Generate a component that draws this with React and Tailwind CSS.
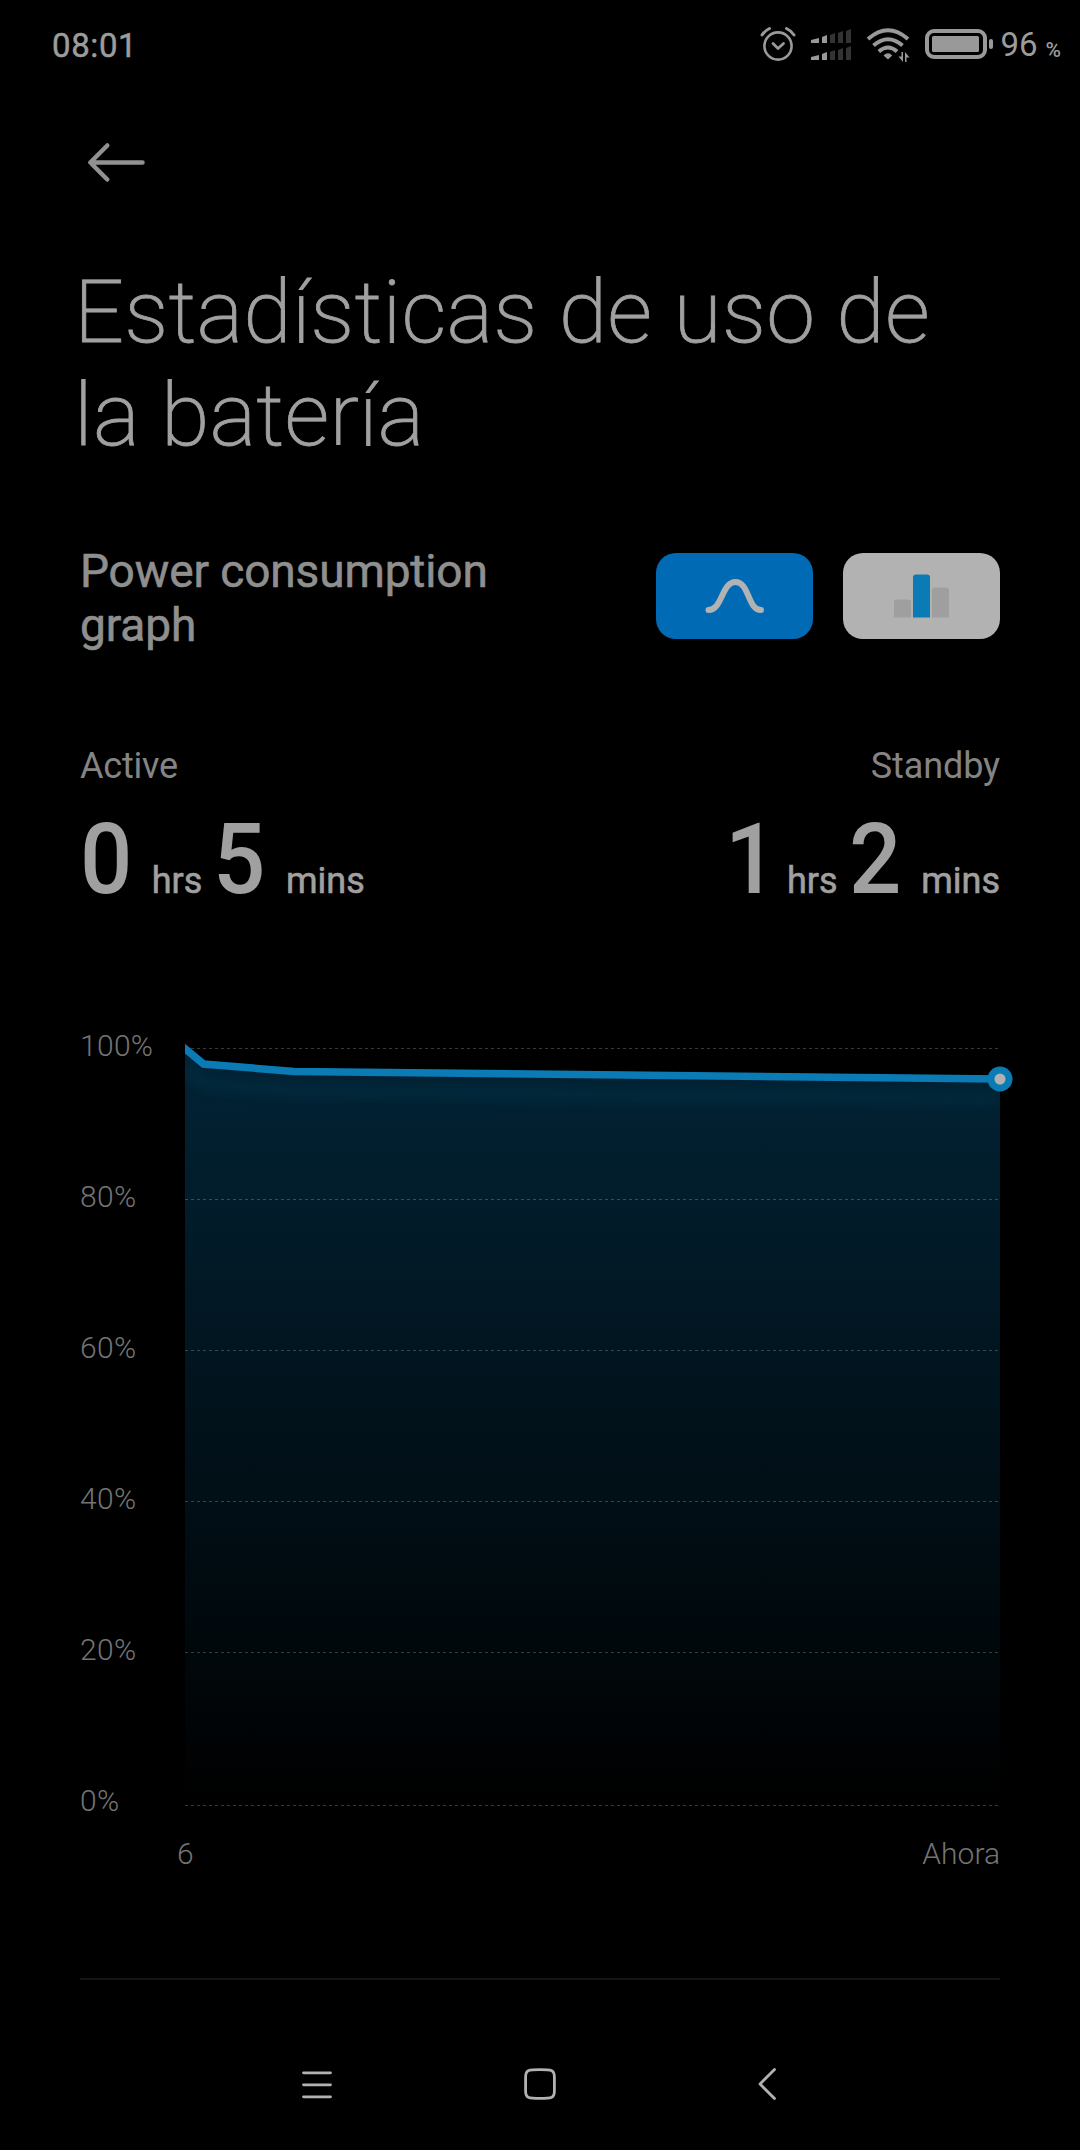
import React from 'react'

const ticks = ['100%', '80%', '60%', '40%', '20%', '0%']
const gridLines = [28, 179, 330, 481, 632, 785]

// battery level over time, in chart pixels
const level = 'M0 28.5L19 44L109 51.5L815 59'

// signal bars: left edge, width, height
const bars = [
  [0, 8, 5],
  [11, 5, 8],
  [19, 5, 10],
  [27, 5, 12],
  [35, 5, 14],
]

function SignalRow({y}) {
  return bars.map(([x, w, h], i) => (
    <path
      key={x}
      d={`M${x} ${y}v${2 - h}l${w} -2v${h}z`}
      fill={i < 2 ? '#999999' : '#333333'}
    />
  ))
}

function StatusBar() {
  return (
    <div className="flex h-[88px] items-start justify-between pl-[52px] pr-[19px] pt-[25px] text-[#9c9c9c]">
      <div className="mt-px text-[33px] leading-[39px] tracking-[0.6px] [-webkit-text-stroke:0.5px_#9c9c9c]">08:01</div>
      <div className="flex">
        <svg className="mt-px h-9 w-9" viewBox="0 0 36 36" fill="none" stroke="#999999">
          <circle cx="18" cy="20" r="13.600" strokeWidth="2.600" />
          <path d="M13 17.500l5 5l5.500 -5" strokeWidth="2.800" strokeLinecap="round" strokeLinejoin="round" />
          <path d="M2 9Q5 4.500 9.500 2.500M34 9Q31 4.500 26.500 2.500" strokeWidth="3" strokeLinecap="round" />
        </svg>
        <svg className="ml-[15px] mt-[3px] h-8 w-10" viewBox="0 0 40 32">
          <SignalRow y={15} />
          <SignalRow y={32} />
        </svg>
        <svg className="ml-[15px] mt-[3px] h-[34px] w-[44px]" viewBox="0 0 44 34" fill="none" stroke="#999999" strokeWidth="4">
          <path d="M2 11Q22 -6.500 42 11" />
          <path d="M7.500 17.500Q22 5 36.500 17.500" />
          <path d="M12.800 23.500Q22 15.500 31 23.500" />
          <path d="M17.500 27.500Q22 23 26.200 27.500L22 31.500z" fill="#999999" stroke="none" />
          <path d="M35.500 24h1.500v10L32.500 28.500h3zM39 34h1.500v-4.500h3L39 24z" fill="#999999" stroke="none" />
        </svg>
        <svg className="ml-[14px] mt-[3px] h-8 w-[70px]" viewBox="0 0 70 32">
          <rect x="3" y="3" width="58" height="26" rx="7" fill="none" stroke="#999999" strokeWidth="4" />
          <rect x="8" y="8" width="47" height="16" rx="1.500" fill="#999999" />
          <rect x="65" y="11" width="4" height="10" rx="2" fill="#999999" />
        </svg>
        <div className="ml-[6px] text-[33px] leading-[39px]">96</div>
        <div className="ml-[8px] mt-[13px] text-[21px] font-medium leading-[24px]">%</div>
      </div>
    </div>
  )
}

function Digit({value}) {
  // a bare "1" sits closer to its unit than the wider digits
  return (
    <span
      className={[
        'inline-block origin-left scale-x-[0.94] text-[98px] font-medium',
        value === '1' ? '-mr-[10px]' : '',
      ].join(' ')}
    >
      {value}
    </span>
  )
}

function Unit({children}) {
  return <span className="[-webkit-text-stroke:0.6px_#a0a0a0]">{children}</span>
}

function Duration({hrs, mins}) {
  return (
    <div className="mt-[15px] flex items-baseline text-[36px] leading-[116px] text-[#a0a0a0]">
      <Digit value={hrs} />
      <span className="w-[16px]" />
      <Unit>hrs</Unit>
      <span className="w-[11px]" />
      <Digit value={mins} />
      <span className="w-[17px]" />
      <Unit>mins</Unit>
    </div>
  )
}

function GraphToggle() {
  return (
    <div className="flex gap-[30px] pt-[9px]">
      <button className="flex h-[86px] w-[157px] items-center justify-center rounded-[20px] bg-[#006bb4]">
        <svg className="h-[36px] w-[60px]" viewBox="0 0 60 36" fill="none" stroke="#b2b2b2" strokeWidth="6" strokeLinecap="round">
          <path d="M3.500 32C17.500 32 16.500 4 30.500 4S42.500 32 56 32" />
        </svg>
      </button>
      <button className="flex h-[86px] w-[157px] items-center justify-center rounded-[20px] bg-[#b2b2b2]">
        <svg className="h-[44px] w-[56px]" viewBox="0 0 56 44">
          <path d="M0 43.500v-15a3 3 0 0 1 3 -3h11a3 3 0 0 1 3 3v15z" fill="#9f9f9f" />
          <path d="M19 43.500v-40a3 3 0 0 1 3 -3h11a3 3 0 0 1 3 3v40z" fill="#0b7bb5" />
          <path d="M38 43.500v-27a3 3 0 0 1 3 -3h11a3 3 0 0 1 3 3v27z" fill="#9f9f9f" />
        </svg>
      </button>
    </div>
  )
}

function BatteryChart() {
  return (
    <div className="flex">
      <div className="flex w-[105px] flex-col text-[30px] font-light leading-[35px] tracking-[0.3px] text-[#747474]">
        {ticks.map((t) => (
          <div key={t} className="h-[151px] pt-[8px]">
            {t}
          </div>
        ))}
      </div>
      <svg className="h-[800px] w-[815px] overflow-visible" viewBox="0 0 815 800" fill="none">
        <defs>
          <linearGradient id="area" x1="0" y1="28" x2="0" y2="785" gradientUnits="userSpaceOnUse">
            <stop offset="0" stopColor="#022335" />
            <stop offset="0.5" stopColor="#01121b" />
            <stop offset="1" stopColor="#000000" />
          </linearGradient>
          <clipPath id="areaClip">
            <path d={`${level}V785H0z`} />
          </clipPath>
          <clipPath id="lineClip">
            <path d="M0 0H830V100H0z" />
          </clipPath>
          <filter id="glow" x="-10%" y="-100%" width="120%" height="400%" colorInterpolationFilters="sRGB">
            <feGaussianBlur stdDeviation="6" />
          </filter>
        </defs>
        <path d={`${level}V785H0z`} fill="url(#area)" />
        <g clipPath="url(#areaClip)">
          <path d={level} transform="translate(0 20)" stroke="#0b7bb5" strokeOpacity="0.1" strokeWidth="12" filter="url(#glow)" />
        </g>
        {gridLines.map((y) => (
          <path key={y} d={`M0 ${y + 0.5}H814`} stroke="#ffffff" strokeOpacity="0.22" strokeDasharray="3 3" />
        ))}
        <path d="M-4 25.300L18.500 44L109 51.500L815 59" stroke="#0b7bb5" strokeWidth="7.500" clipPath="url(#lineClip)" />
        <circle cx="815" cy="59" r="12.500" fill="#0b7bb5" />
        <circle cx="815" cy="59" r="5.500" fill="#b2b2b2" />
      </svg>
    </div>
  )
}

function NavBar() {
  return (
    <div className="flex pl-[301px] pt-[88px] text-[#b2b2b2]">
      <svg className="h-8 w-8" viewBox="0 0 32 32" fill="none" stroke="currentColor" strokeWidth="2.800" strokeLinecap="round">
        <path d="M2.500 4.800h27M2.500 16.800h27M2.500 28.800h27" />
      </svg>
      <svg className="ml-[191px] h-8 w-8" viewBox="0 0 32 32" fill="none" stroke="currentColor" strokeWidth="2.800">
        <path d="M16 1.600C27 1.600 30.400 1.600 30.400 9V23C30.400 30.400 27 30.400 16 30.400S1.600 30.400 1.600 23V9C1.600 1.600 5 1.600 16 1.600z" />
      </svg>
      <svg className="ml-[201px] h-8 w-5" viewBox="0 0 20 32" fill="none" stroke="currentColor" strokeWidth="2.800" strokeLinecap="round" strokeLinejoin="round">
        <path d="M17.500 1.500L3 16L17.500 30.500" />
      </svg>
    </div>
  )
}

export default function App() {
  return (
    <div className="h-[2150px] w-[1080px] overflow-hidden bg-black font-['Roboto',sans-serif]">
      <StatusBar />
      <main className="px-[80px]">
        <svg className="ml-[7px] mt-[53px] h-[42px] w-[60px]" viewBox="0 0 60 42" fill="none" stroke="#919191" strokeWidth="4.500" strokeLinecap="round" strokeLinejoin="round">
          <path d="M20.300 4.500L3.300 21.500L20.300 38.500M3.500 21.500H55.500" />
        </svg>
        <h1 className="-ml-[6px] mt-[77px] whitespace-nowrap text-[88px] font-extralight leading-[103px] tracking-[0.1px] text-[#a0a0a0] [-webkit-text-stroke:0.8px_#a0a0a0]">
          Estadísticas de uso de
          <br />
          la batería
        </h1>
        <div className="mt-[78px] flex items-start justify-between">
          <h2 className="text-[46px] leading-[54px] tracking-[-0.12px] text-[#8f8f8f] [-webkit-text-stroke:0.6px_#8f8f8f]">
            Power consumption
            <br />
            graph
          </h2>
          <GraphToggle />
        </div>
        <div className="mt-[93px] flex justify-between">
          <div>
            <div className="text-[36px] leading-[42px] tracking-[-0.2px] text-[#848484]">Active</div>
            <Duration hrs="0" mins="5" />
          </div>
          <div className="flex flex-col items-end">
            <div className="text-[36px] leading-[42px] tracking-[-0.1px] text-[#848484]">Standby</div>
            <Duration hrs="1" mins="2" />
          </div>
        </div>
        <div className="mt-[81px] h-[816px]">
          <BatteryChart />
        </div>
        <div className="flex justify-between pl-[97px] text-[30px] font-light leading-[35px] text-[#747474]">
          <span>6</span>
          <span>Ahora</span>
        </div>
        <div className="mt-[107px] h-[2px] bg-[#141414]" />
      </main>
      <NavBar />
    </div>
  )
}
